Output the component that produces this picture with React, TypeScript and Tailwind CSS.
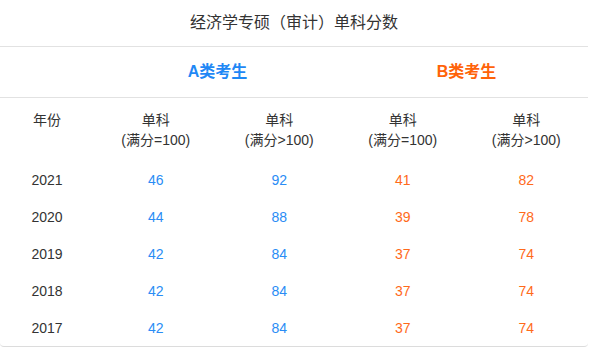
import React from "react";

const rows = [
  ["2021", "46", "92", "41", "82"],
  ["2020", "44", "88", "39", "78"],
  ["2019", "42", "84", "37", "74"],
  ["2018", "42", "84", "37", "74"],
  ["2017", "42", "84", "37", "74"],
];

export default function App() {
  return (
    <div
      className="w-[589px] h-[351px] bg-white text-[#333]"
      style={{ fontFamily: '"Liberation Sans", "Noto Sans CJK SC", sans-serif' }}
    >
      <div className="w-[588px] rounded-b-[4px] border-b border-[#dcdcdc]">
        <div className="h-[47px] flex items-center justify-center text-base border-b border-[#e2e2e2]">
          经济学专硕（审计）单科分数
        </div>
        <div className="h-[51px] grid grid-cols-[94px_1fr_1fr] items-center border-b border-[#e2e2e2] text-base font-bold">
          <div />
          <div className="text-center text-[#1f88f5]">A类考生</div>
          <div className="text-center text-[#ff6309] pl-[4px]">B类考生</div>
        </div>
        <div className="grid grid-cols-[94px_repeat(4,1fr)] text-sm">
          <div className="h-[63px] pt-[12px] leading-5 text-center">年份</div>
          {["=", ">", "=", ">"].map((s, i) => (
            <div key={i} className="h-[63px] pt-[12px] leading-5 text-center">
              <div>单科</div>
              <div>(满分{s}100)</div>
            </div>
          ))}
          {rows.map((r) => (
            <React.Fragment key={r[0]}>
              <div className="h-[37px] flex items-center justify-center">{r[0]}</div>
              <div className="h-[37px] flex items-center justify-center text-[#2a8cf5]">{r[1]}</div>
              <div className="h-[37px] flex items-center justify-center text-[#2a8cf5]">{r[2]}</div>
              <div className="h-[37px] flex items-center justify-center text-[#ff6a1a]">{r[3]}</div>
              <div className="h-[37px] flex items-center justify-center text-[#ff6a1a]">{r[4]}</div>
            </React.Fragment>
          ))}
        </div>
      </div>
    </div>
  );
}
